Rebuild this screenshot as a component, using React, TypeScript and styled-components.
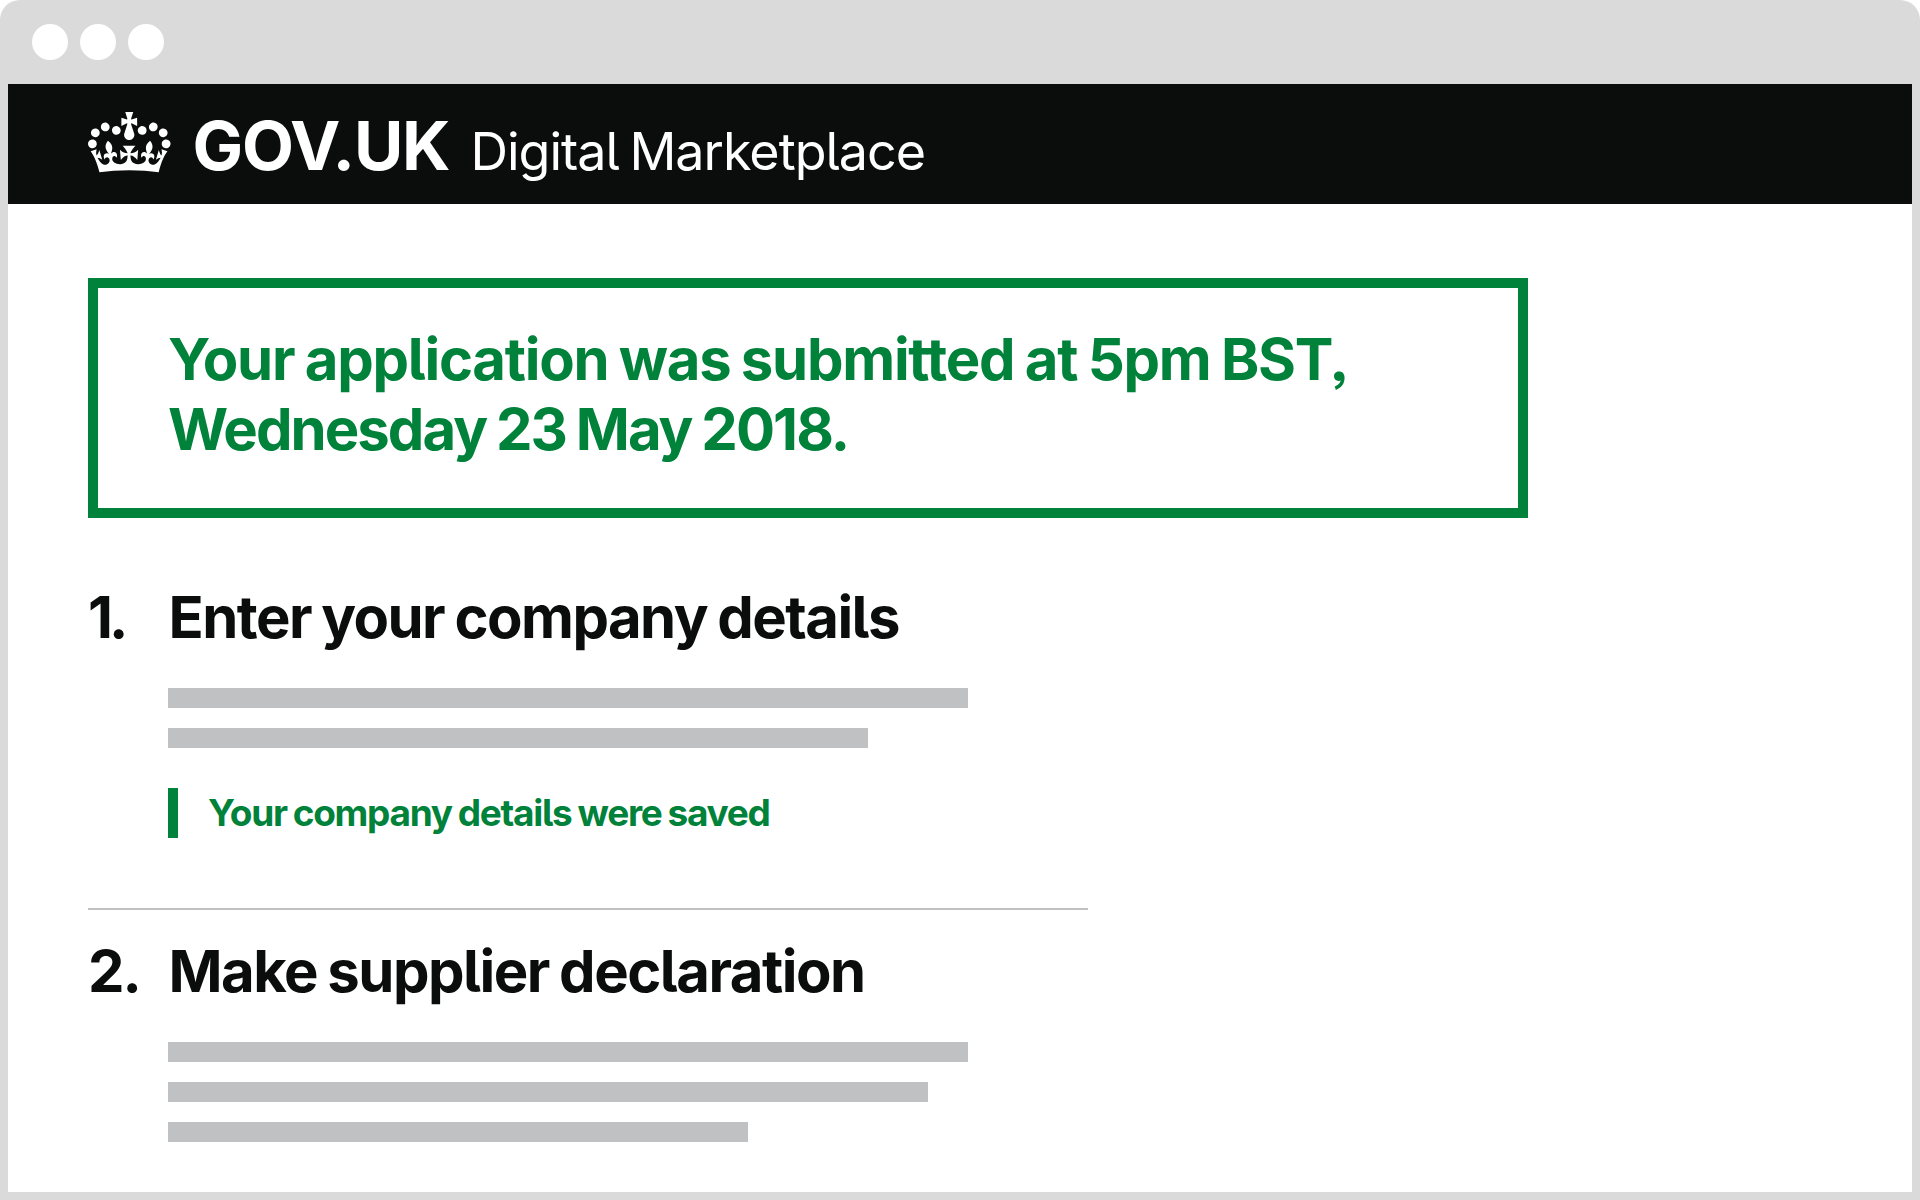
import React from "react";
import styled, { createGlobalStyle } from "styled-components";

const ink = "#0b0c0c";
const green = "#00823b";
const chrome = "#dadada";
const rule = "#bfc1c3";

const GlobalStyle = createGlobalStyle`
  *, *::before, *::after { box-sizing: border-box; }
  html { background: #ffffff; }
  body {
    margin: 0;
    color: ${ink};
    font-family: "Inter", "Liberation Sans", sans-serif;
    font-feature-settings: "cv05", "ss03", "calt" 0, "liga" 0, "dlig" 0;
  }
  h1, h2, p { margin: 0; }
`;

const Window = styled.div`
  display: flex;
  flex-direction: column;
  width: 1920px;
  height: 1200px;
  padding: 0 8px 8px;
  background: ${chrome};
  border-radius: 20px 20px 0 0;
  overflow: hidden;
`;

const TitleBar = styled.div`
  display: flex;
  align-items: center;
  gap: 12px;
  height: 84px;
  padding-left: 24px;
`;

const WindowDot = styled.span`
  width: 36px;
  height: 36px;
  border-radius: 50%;
  background: #ffffff;
`;

const Header = styled.header`
  display: flex;
  align-items: flex-start;
  height: 120px;
  padding: 0 80px;
  background: ${ink};
  color: #ffffff;
`;

const Crown = styled.svg`
  width: 82.5px;
  height: 61px;
  margin-top: 28px;
  fill: currentColor;
`;

const Branding = styled.div`
  display: flex;
  align-items: baseline;
  margin: 22px 0 0 22px;
  line-height: 80px;
  white-space: nowrap;
`;

const Logotype = styled.span`
  font-size: 67.5px;
  font-weight: 700;
  letter-spacing: -1.25px;
`;

const ServiceName = styled.span`
  margin-left: 21px;
  font-size: 52px;
  font-weight: 400;
  letter-spacing: -1px;
  word-spacing: -3px;
`;

const Page = styled.main`
  flex: 1;
  padding: 74px 80px 0;
  background: #ffffff;
`;

const Banner = styled.section`
  width: 1440px;
  height: 240px;
  padding: 36px 70px;
  border: 10px solid ${green};
  color: ${green};
`;

const BannerLine = styled.span<{ $tracking: number }>`
  display: block;
  font-size: 58px;
  font-weight: 700;
  line-height: 70px;
  letter-spacing: ${(p) => p.$tracking}px;
  word-spacing: -2px;
  white-space: nowrap;
`;

const Steps = styled.ol`
  width: 1000px;
  margin: 0;
  padding: 64px 0 0;
  list-style: none;
`;

const Step = styled.li`
  & + & {
    margin-top: 70px;
    padding-top: 26px;
    border-top: 2px solid ${rule};
  }
`;

const StepTitle = styled.h2<{ $tracking: number }>`
  display: grid;
  grid-template-columns: 80.5px 1fr;
  font-size: 58px;
  font-weight: 700;
  line-height: 70px;
  letter-spacing: ${(p) => p.$tracking}px;
  word-spacing: -2px;
  white-space: nowrap;
`;

const StepNumber = styled.span<{ $tracking: number }>`
  letter-spacing: ${(p) => p.$tracking}px;
`;

const StepBody = styled.div`
  padding: 36px 0 0 80px;
`;

const Lines = styled.div`
  display: flex;
  flex-direction: column;
  gap: 20px;
`;

const TextBar = styled.div<{ $width: number }>`
  width: ${(p) => p.$width}px;
  height: 20px;
  background: ${rule};
`;

const SavedNote = styled.p`
  height: 50px;
  margin-top: 40px;
  padding-left: 30px;
  border-left: 10px solid ${green};
  color: ${green};
  font-size: 37px;
  font-weight: 700;
  line-height: 50px;
  letter-spacing: -1.28px;
  word-spacing: -1.5px;
  white-space: nowrap;
`;

const steps = [
  {
    number: "1.",
    numberTracking: -4,
    title: "Enter your company details",
    tracking: -1.54,
    bars: [800, 700],
    note: "Your company details were saved",
  },
  {
    number: "2.",
    numberTracking: -2,
    title: "Make supplier declaration",
    tracking: -1.5,
    bars: [800, 760, 580],
    note: null,
  },
];

export default function App() {
  return (
    <>
      <GlobalStyle />
      <Window>
        <TitleBar>
          <WindowDot />
          <WindowDot />
          <WindowDot />
        </TitleBar>
        <Header>
          <Crown viewBox="0 0 132 97" preserveAspectRatio="none" aria-hidden="true">
            <path
              fillRule="evenodd"
              d="M25 30.2c3.5 1.5 7.7-.2 9.1-3.7 1.5-3.6-.2-7.8-3.9-9.2-3.6-1.4-7.6.3-9.1 3.9-1.4 3.5.3 7.5 3.9 9zM9 39.5c3.6 1.5 7.8-.2 9.2-3.7 1.5-3.6-.2-7.8-3.9-9.1-3.6-1.5-7.6.2-9.1 3.8-1.4 3.5.3 7.5 3.8 9zM4.4 57.2c3.5 1.5 7.7-.2 9.1-3.8 1.5-3.6-.2-7.7-3.9-9.1-3.5-1.5-7.6.3-9.1 3.8-1.4 3.5.3 7.6 3.9 9.1zm38.3-21.4c3.5 1.5 7.7-.2 9.1-3.8 1.5-3.6-.2-7.7-3.9-9.1-3.6-1.5-7.6.3-9.1 3.8-1.3 3.6.4 7.7 3.9 9.1zm64.4-5.6c-3.6 1.5-7.8-.2-9.1-3.7-1.5-3.6.2-7.8 3.8-9.2 3.6-1.4 7.7.3 9.2 3.9 1.3 3.5-.4 7.5-3.9 9zm15.9 9.3c-3.6 1.5-7.7-.2-9.1-3.7-1.5-3.6.2-7.8 3.7-9.1 3.6-1.5 7.7.2 9.2 3.8 1.5 3.5-.3 7.5-3.8 9zm4.7 17.7c-3.6 1.5-7.8-.2-9.2-3.8-1.5-3.6.2-7.7 3.9-9.1 3.6-1.5 7.7.3 9.2 3.8 1.3 3.5-.4 7.6-3.9 9.1zM89.3 35.8c-3.6 1.5-7.8-.2-9.2-3.8-1.4-3.6.2-7.7 3.9-9.1 3.6-1.5 7.7.3 9.2 3.8 1.4 3.6-.3 7.7-3.9 9.1zM69.7 17.7l8.9 4.7V9.3l-8.9 2.8c-.2-.3-.5-.6-.9-.9L72.4 0H59.6l3.5 11.2c-.3.3-.6.5-.9.9l-8.8-2.8v13.1l8.8-4.7c.3.3.6.7.9.9l-5 15.4v.1c-.2.8-.4 1.6-.4 2.4 0 4.1 3.1 7.5 7 8.1h.2c.3 0 .7.1 1 .1.4 0 .7 0 1-.1h.2c4-.6 7.1-4.1 7.1-8.1 0-.8-.1-1.7-.4-2.4V34l-5.1-15.4c.4-.2.7-.6 1-.9zM66 92.8c16.9 0 32.8 1.1 47.1 3.2 4-16.9 8.9-26.7 14-33.5l-9.6-3.4c1 4.9 1.1 7.2 0 10.2-1.5-1.4-3-4.3-4.2-8.7L108.6 76c2.8-2 5-3.2 7.5-3.3-4.4 9.4-10 11.9-13.6 11.2-4.3-.8-6.3-4.6-5.6-7.9 1-4.7 5.7-5.9 8-.5 4.3-8.7-3-11.4-7.6-8.8 7.1-7.2 7.9-13.5 2.1-21.1-8 6.1-8.1 12.3-4.5 20.8-4.7-5.4-12.1-2.5-9.5 6.2 3.4-5.2 7.9-2 7.2 3.1-.6 4.3-6.4 7.8-13.5 7.2-10.3-.9-10.9-8-11.2-13.8 2.5-.5 7.1 1.8 11 7.3L80.2 60c-4.1 4.4-8 5.3-12.3 5.4 1.4-4.4 8-11.6 8-11.6H55.5s6.4 7.2 7.9 11.6c-4.2-.1-8-1-12.3-5.4l1.4 16.4c3.9-5.5 8.5-7.7 10.9-7.3-.3 5.8-.9 12.8-11.1 13.8-7.2.6-12.9-2.9-13.5-7.2-.7-5 3.8-8.3 7.1-3.1 2.7-8.7-4.6-11.6-9.4-6.2 3.7-8.5 3.6-14.7-4.6-20.8-5.8 7.6-5 13.9 2.2 21.1-4.7-2.6-11.9.1-7.7 8.8 2.3-5.5 7.1-4.2 8.1.5.7 3.3-1.3 7.1-5.7 7.9-3.5.7-9-1.8-13.5-11.2 2.5.1 4.7 1.3 7.5 3.3l-4.7-15.4c-1.2 4.4-2.7 7.2-4.3 8.7-1.1-3-.9-5.3 0-10.2l-9.5 3.4c5 6.9 9.9 16.7 14 33.5 14.8-2.1 30.8-3.2 47.7-3.2z"
            />
          </Crown>
          <Branding>
            <Logotype>GOV.UK</Logotype>
            <ServiceName>Digital Marketplace</ServiceName>
          </Branding>
        </Header>
        <Page>
          <Banner>
            <h1>
              <BannerLine $tracking={-1.26}>Your application was submitted at 5pm BST,</BannerLine>
              <BannerLine $tracking={-1.95}>Wednesday 23 May 2018.</BannerLine>
            </h1>
          </Banner>
          <Steps>
            {steps.map((step) => (
              <Step key={step.number}>
                <StepTitle $tracking={step.tracking}>
                  <StepNumber $tracking={step.numberTracking}>{step.number}</StepNumber>
                  <span>{step.title}</span>
                </StepTitle>
                <StepBody>
                  <Lines>
                    {step.bars.map((width) => (
                      <TextBar key={width} $width={width} />
                    ))}
                  </Lines>
                  {step.note && <SavedNote>{step.note}</SavedNote>}
                </StepBody>
              </Step>
            ))}
          </Steps>
        </Page>
      </Window>
    </>
  );
}
